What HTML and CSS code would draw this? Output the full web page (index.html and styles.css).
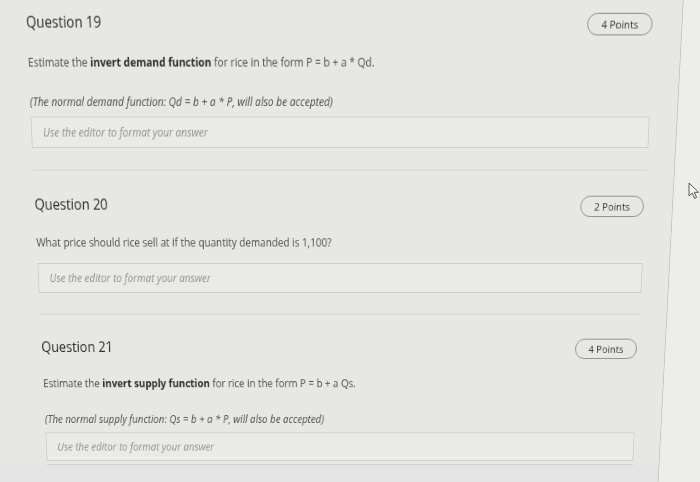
FILE: index.html
```html
<!DOCTYPE html>
<html lang="en">
<head>
<meta charset="UTF-8" />
<meta name="viewport" content="width=device-width, initial-scale=1" />
<title>Quiz</title>
<link rel="stylesheet" href="styles.css">
</head>
<body>

<div class="screen">
  <main class="quiz">

    <section class="question">
      <header class="q-head">
        <h2>Question 19</h2>
        <span class="points">4 Points</span>
      </header>
      <p class="prompt">Estimate the <strong>invert demand function</strong> for rice in the form P = b + a * Qd.</p>
      <p class="prompt note">(The normal demand function: Qd = b + a * P, will also be accepted)</p>
      <div class="answer">Use the editor to format your answer</div>
    </section>

    <section class="question">
      <header class="q-head">
        <h2>Question 20</h2>
        <span class="points">2 Points</span>
      </header>
      <p class="prompt">What price should rice sell at if the quantity demanded is 1,100?</p>
      <div class="answer">Use the editor to format your answer</div>
    </section>

    <section class="question">
      <header class="q-head">
        <h2>Question 21</h2>
        <span class="points">4 Points</span>
      </header>
      <p class="prompt">Estimate the <strong>invert supply function</strong> for rice in the form P = b + a Qs.</p>
      <p class="prompt note">(The normal supply function: Qs = b + a * P, will also be accepted)</p>
      <div class="answer">Use the editor to format your answer</div>
    </section>

    <footer class="quiz-end"></footer>
  </main>
  <div class="gutter"></div>
</div>

<!-- mouse pointer left on the page -->
<svg class="cursor" width="12" height="18" viewBox="0 0 12 18">
  <path d="M1 1 L1 14 L4.2 11 L6.6 16.4 L8.6 15.5 L6.3 10.3 L10.6 10.3 Z" fill="#f4f4f2" stroke="#5a5a5a" stroke-width="1" stroke-linejoin="round"/>
</svg>

</body>
</html>
```

FILE: styles.css
```css
body {
  margin: 0;
  overflow: hidden;
  background: #ededeb;
  font-family: "Open Sans", "Liberation Sans", sans-serif;
  color: #4c4c4c;
}

/* the photo of the screen is seen slightly from above */
.screen {
  display: flex;
  width: 960px;
  margin-left: -100px;
  transform-origin: 438px 0;
  transform: perspective(1000px) rotateX(-8.6deg) scaleX(0.86);
}

.quiz {
  width: 733px;
  padding: 0 32px 0 74px;
  background: #e7e7e5;
  border-right: 1px solid #c4c4c2;
}

.gutter {
  flex: 1;
  background: #ededeb;
}

.question {
  padding: 26px 0 23px;
  border-bottom: 1px solid #d0d0ce;
}

.question:first-child {
  padding-top: 12px;
}

.question:last-of-type {
  padding-bottom: 4px;
  border-bottom-color: #cbcbc9;
}

.q-head {
  display: flex;
  justify-content: space-between;
  align-items: flex-start;
}

.q-head h2 {
  margin: 0;
  font-size: 15.5px;
  font-weight: 400;
  line-height: 20px;
  color: #2c2c2c;
}

.points {
  margin: 1px 2px 0 0;
  width: 76px;
  height: 23px;
  box-sizing: border-box;
  border: 1px solid #888886;
  border-radius: 12px;
  display: flex;
  align-items: center;
  justify-content: center;
  font-size: 11.5px;
  color: #363636;
}

.prompt {
  margin: 19px 0 0;
  font-size: 12px;
  line-height: 18px;
}

.prompt strong {
  color: #2e2e2e;
  font-weight: 700;
}

.note {
  margin-top: 23px;
  font-style: italic;
}

.answer {
  margin-top: 13px;
  height: 33px;
  box-sizing: border-box;
  border: 1px solid #cdcdcb;
  background: #eaeae8;
  padding-left: 13px;
  display: flex;
  align-items: center;
  font-size: 12px;
  font-style: italic;
  color: #90908e;
}

.note + .answer {
  margin-top: 6px;
}

.quiz-end {
  height: 40px;
  margin: 0 -32px 0 -74px;
  background: #e3e4e3;
}

.cursor {
  position: absolute;
  left: 688px;
  top: 182px;
}
```
